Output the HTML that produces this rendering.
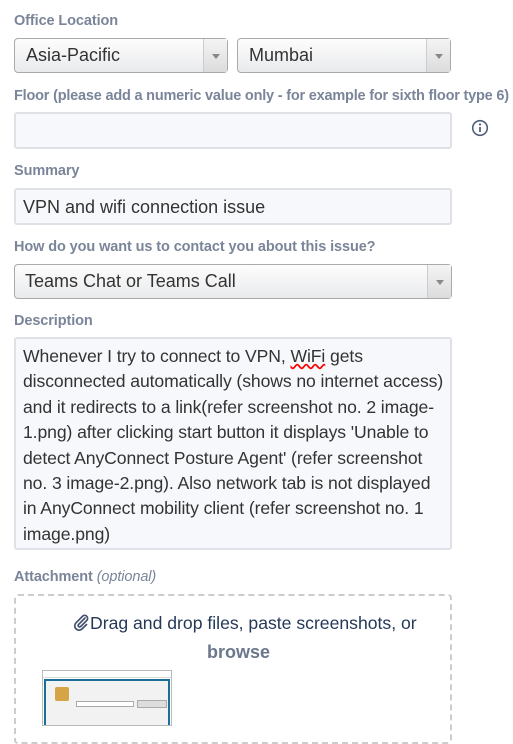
<!DOCTYPE html>
<html><head><meta charset="utf-8"><style>
*{box-sizing:border-box;margin:0;padding:0}
body{width:513px;height:726px;overflow:hidden;background:#fff;font-family:"Liberation Sans",sans-serif;position:relative}
.lbl{position:absolute;left:14px;font-size:14.5px;font-weight:bold;color:#7a8599;white-space:nowrap;letter-spacing:-0.1px}
.box{position:absolute;border:2px solid #dfe1e6;background:#f6f8fb;border-radius:3px;font-size:18px;color:#333;white-space:nowrap}
.sel{background:linear-gradient(#fdfdfd,#e9eaec);border:1px solid #aaa;border-radius:4px}
.arr{position:absolute;right:0;top:0;bottom:0;width:24px;border-left:1px solid #ccc;background:linear-gradient(#f4f4f4,#dcdcdc)}
.arr:after{content:"";position:absolute;left:8px;top:15px;border:4px solid transparent;border-top:5px solid #888}
.t{position:absolute;left:9px;top:6px}
.ta div{height:25.4px;line-height:25.4px}
</style></head><body>
<div class="lbl" style="top:13px">Office Location</div>
<div class="box sel" style="left:14px;top:38px;width:214px;height:35px"><span class="t" style="left:11px">Asia-Pacific</span><div class="arr"></div></div>
<div class="box sel" style="left:237px;top:38px;width:214px;height:35px"><span class="t" style="left:11px">Mumbai</span><div class="arr"></div></div>
<div class="lbl" style="top:88px;letter-spacing:-0.2px">Floor (please add a numeric value only - for example for sixth floor type 6)</div>
<div class="box" style="left:14px;top:112px;width:438px;height:37px"></div>
<svg style="position:absolute;left:471px;top:119px" width="18" height="18" viewBox="0 0 18 18"><circle cx="9" cy="9" r="7.3" fill="none" stroke="#505f79" stroke-width="1.6"/><rect x="8.1" y="8" width="1.8" height="5" fill="#505f79"/><circle cx="9" cy="5.5" r="1.1" fill="#505f79"/></svg>
<div class="lbl" style="top:163px">Summary</div>
<div class="box" style="left:14px;top:188px;width:438px;height:37px"><span class="t" style="left:7px;top:7px">VPN and wifi connection issue</span></div>
<div class="lbl" style="top:239px">How do you want us to contact you about this issue?</div>
<div class="box sel" style="left:14px;top:264px;width:438px;height:35px"><span class="t" style="left:10px">Teams Chat or Teams Call</span><div class="arr"></div></div>
<div class="lbl" style="top:313px">Description</div>
<div class="box ta" style="left:14px;top:337px;width:438px;height:213px;padding:5px 0 0 7px;font-size:17.6px;letter-spacing:-0.1px">
<div>Whenever I try to connect to VPN, <span style="text-decoration:underline wavy red">WiFi</span> gets</div>
<div>disconnected automatically (shows no internet access)</div>
<div>and it redirects to a link(refer screenshot no. 2 image-</div>
<div>1.png) after clicking start button it displays 'Unable to</div>
<div>detect AnyConnect Posture Agent' (refer screenshot</div>
<div>no. 3 image-2.png). Also network tab is not displayed</div>
<div>in AnyConnect mobility client (refer screenshot no. 1</div>
<div>image.png)</div>
</div>
<div class="lbl" style="top:569px">Attachment <i style="font-weight:normal">(optional)</i></div>
<div style="position:absolute;left:14px;top:594px;width:438px;height:150px;border:2px dashed #ccc;border-radius:4px"></div>
<div style="position:absolute;left:72px;top:613px;font-size:17.6px;color:#253858;white-space:nowrap">
<svg width="18" height="18" viewBox="0 0 18 18" style="vertical-align:-2px"><path d="M13 5 L6.5 11.5 A1.5 1.5 0 0 0 8.6 13.6 L15 7.2 A3 3 0 0 0 10.8 3 L4 9.8 A4.3 4.3 0 0 0 10.1 15.9 L14.5 11.5" fill="none" stroke="#42526e" stroke-width="1.7" stroke-linecap="round"/></svg>Drag and drop files, paste screenshots, or</div>
<div style="position:absolute;left:0;width:477px;top:642px;text-align:center;font-size:18px;color:#6b778c;font-weight:bold">browse</div>
<div style="position:absolute;left:42px;top:670px;width:130px;height:56px;border:1px solid #bbb;background:#fff">
<div style="height:7px;background:#fff;border-bottom:1px solid #ddd"></div>
<div style="position:absolute;left:1px;right:1px;top:8px;bottom:0;background:#1a6f97"><div style="position:absolute;left:2px;right:2px;top:2px;height:44px;background:#f2f2f2"><div style="position:absolute;left:9px;top:6px;width:14px;height:14px;background:#d4a445;border-radius:2px"></div><div style="position:absolute;left:30px;top:20px;width:58px;height:6px;border:1px solid #aaa;background:#fff"></div><div style="position:absolute;left:91px;top:19px;width:30px;height:8px;background:#ddd;border:1px solid #aaa"></div></div></div>
</div>
</body></html>
